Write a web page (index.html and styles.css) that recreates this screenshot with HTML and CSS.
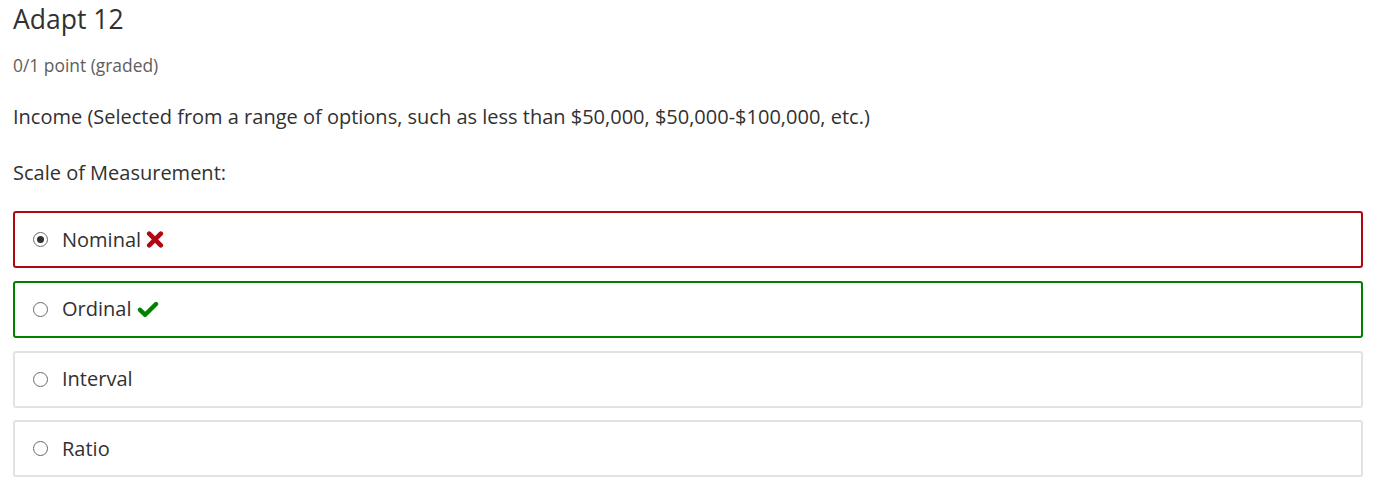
FILE: index.html
```html
<!DOCTYPE html>
<html>
<head>
<meta charset="utf-8">
<link rel="stylesheet" href="styles.css">
</head>
<body>
<div class="problem">
  <h3 class="title">Adapt 12</h3>
  <div class="points">0/1 point (graded)</div>
  <p class="prompt">Income (Selected from a range of options, such as less than $50,000, $50,000-$100,000, etc.)</p>
  <p class="prompt label">Scale of Measurement:</p>
  <div class="choices">
    <label class="choice incorrect">
      <span class="radio checked"></span>
      <span class="text">Nominal</span>
      <svg class="mark cross" width="18" height="17" viewBox="0 0 18 17"><path d="M3.2 2.7 L14.8 14.3 M14.8 2.7 L3.2 14.3" stroke="#b20610" stroke-width="4.6" stroke-linecap="round" fill="none"/></svg>
    </label>
    <label class="choice correct">
      <span class="radio"></span>
      <span class="text">Ordinal</span>
      <svg class="mark check" width="22" height="17" viewBox="0 0 22 17"><path d="M3 8.8 L8.2 13.8 L19 3" stroke="#008100" stroke-width="4.4" stroke-linecap="round" stroke-linejoin="round" fill="none"/></svg>
    </label>
    <label class="choice">
      <span class="radio"></span>
      <span class="text">Interval</span>
    </label>
    <label class="choice">
      <span class="radio"></span>
      <span class="text">Ratio</span>
    </label>
  </div>
</div>
</body>
</html>
```
FILE: styles.css
```css
body {
  margin: 0;
  background: #fff;
  font-family: "Open Sans", "Liberation Sans", sans-serif;
  color: #313131;
}
.problem {
  padding: 0 14px 0 13px;
}
.title {
  margin: 0;
  padding-top: 3px;
  font-size: 26.5px;
  font-weight: 400;
  line-height: 32px;
  color: #313131;
}
.points {
  margin-top: 19px;
  font-size: 17.4px;
  line-height: 22px;
  color: #5e5e5e;
}
.prompt {
  margin: 0;
  margin-top: 28px;
  font-size: 20px;
  line-height: 26px;
  color: #313131;
}
.prompt.label {
  margin-top: 30px;
}
.choices {
  margin-top: 25px;
  display: flex;
  flex-direction: column;
  gap: 12.8px;
}
.choice {
  display: flex;
  align-items: center;
  height: 57px;
  box-sizing: border-box;
  border: 2px solid #e2e2e2;
  border-radius: 3px;
  padding-left: 18px;
  font-size: 20px;
  color: #313131;
}
.choice.incorrect { border-color: #b20610; }
.choice.correct { border-color: #008100; }
.radio {
  width: 15px;
  height: 15px;
  border: 1.5px solid #6a6a6a;
  border-radius: 50%;
  box-sizing: border-box;
  position: relative;
  margin-right: 14px;
  background: #fff;
  flex: none;
}
.radio.checked::after {
  content: "";
  position: absolute;
  left: 2.5px;
  top: 2.5px;
  width: 7px;
  height: 7px;
  border-radius: 50%;
  background: #303030;
}
.text { line-height: 26px; }
.mark { margin-left: 5px; flex: none; }
.check { margin-left: 6px; }
```
